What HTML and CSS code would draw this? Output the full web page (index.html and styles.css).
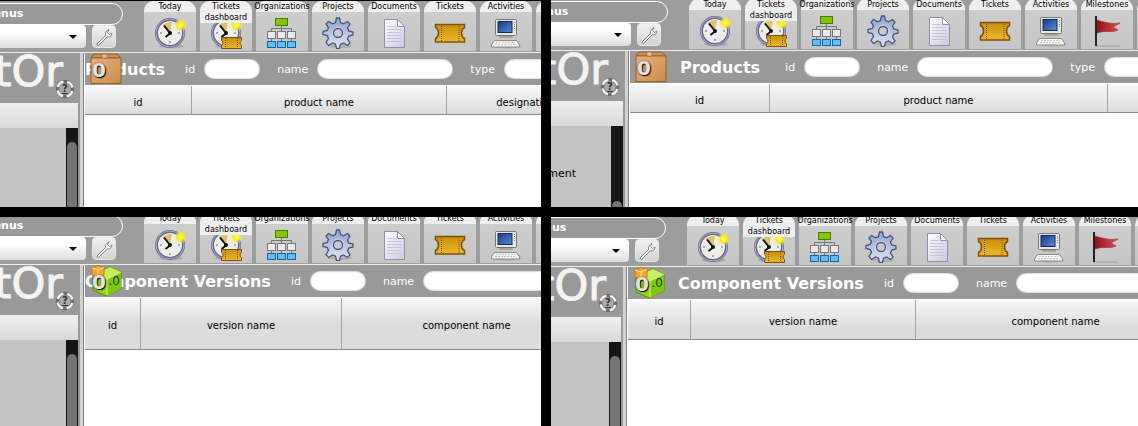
FILE: index.html
```html
<!DOCTYPE html>
<html lang="en">
<head>
  <meta charset="UTF-8">
  <meta name="viewport" content="width=device-width, initial-scale=1">
  <title>Products and Component Versions</title>
  <link rel="stylesheet" href="styles.css">
</head>
<body>
  <!-- Icon definitions -->
  <svg class="defs" aria-hidden="true">
    <defs>
      <linearGradient id="gGear" x1="0" y1="0" x2="0" y2="1"><stop offset="0" stop-color="#8fa3cc"/><stop offset="1" stop-color="#e4e4f2"/></linearGradient>
      <linearGradient id="gTicket" x1="0" y1="0" x2="0" y2="1"><stop offset="0" stop-color="#c98f0c"/><stop offset="1" stop-color="#ecb82c"/></linearGradient>
      <linearGradient id="gScreen" x1="0" y1="0" x2="1" y2="1"><stop offset="0" stop-color="#173a86"/><stop offset="1" stop-color="#5b8ad6"/></linearGradient>
      <linearGradient id="gDoc" x1="0" y1="0" x2="1" y2="1"><stop offset="0" stop-color="#ffffff"/><stop offset="1" stop-color="#c9c9e2"/></linearGradient>
      <linearGradient id="gFlag" x1="0" y1="0" x2="1" y2="0"><stop offset="0" stop-color="#8c1218"/><stop offset="1" stop-color="#e0545a"/></linearGradient>
      <linearGradient id="gBox" x1="0" y1="0" x2="1" y2="1"><stop offset="0" stop-color="#e8b27c"/><stop offset="1" stop-color="#cb8a4c"/></linearGradient>
      <radialGradient id="gSun"><stop offset="0" stop-color="#fffb60"/><stop offset="0.5" stop-color="#f7ea20"/><stop offset="1" stop-color="#f7ea20" stop-opacity="0"/></radialGradient>
    </defs>
    <symbol id="clock" viewBox="0 0 32 32">
      <ellipse cx="17" cy="29" rx="12" ry="2.5" fill="#999" opacity="0.6"/>
      <circle cx="16" cy="16" r="13.5" fill="#ededec" stroke="#67698f" stroke-width="3"/>
      <circle cx="16" cy="16" r="14" fill="none" stroke="#a9abc9" stroke-width="1"/>
      <path d="M16 16 8.500 8.500Q12 4.500 18 5Z" fill="#dfc268"/>
      <path d="M16 16 10 8.500M16 16.500l-4.500 3.500" stroke="#111" stroke-width="2" fill="none"/>
      <circle cx="16" cy="16" r="2" fill="#111"/>
      <path d="M16 24v2M24 16h2M6 16h2" stroke="#aaa" stroke-width="2"/>
      <circle cx="26.500" cy="8" r="6.500" fill="url(#gSun)"/>
    </symbol>
    <symbol id="ticket" viewBox="0 0 32 32">
      <path d="M1.500 7.500h29v3q-3 1.500-3 5.500t3 5.500v3.500h-29v-3.500q3-1.500 3-5.500t-3-5.500z" fill="url(#gTicket)" stroke="#7f500d" stroke-width="1.500"/>
      <path d="M7.500 9v15M25 9v15" stroke="#7f500d" stroke-width="1" stroke-dasharray="1 1"/>
    </symbol>
    <symbol id="clockticket" viewBox="0 0 32 32">
      <use href="#clock" width="32" height="32"/>
      <path d="M11.500 20.500h20v3q-1.500 1-1.500 2.500t1.500 2.500v3h-20v-3q1.500-1 1.500-2.500t-1.500-2.500z" fill="url(#gTicket)" stroke="#7f500d"/>
      <path d="M15.500 21v10M27.500 21v10" stroke="#7f500d" stroke-dasharray="1 1"/>
    </symbol>
    <symbol id="orgs" viewBox="0 0 32 32">
      <path d="M15.500 9v17M5.500 26V11.500h20V26" fill="none" stroke="#777"/>
      <rect x="9.500" y="1.500" width="12" height="7" fill="#82c500" stroke="#4c7b05"/>
      <g fill="#e9e9ee" stroke="#777"><rect x="1.500" y="14.500" width="8" height="7"/><rect x="11.500" y="14.500" width="8" height="7"/><rect x="21.500" y="14.500" width="8" height="7"/></g>
      <g fill="#66bdf5" stroke="#1465a3"><rect x="1.500" y="24.500" width="8" height="6"/><rect x="11.500" y="24.500" width="8" height="6"/><rect x="21.500" y="24.500" width="8" height="6"/></g>
    </symbol>
    <symbol id="gear" viewBox="0 0 32 32">
      <ellipse cx="18" cy="29" rx="12" ry="2" fill="#999" opacity="0.5"/>
      <path d="M13.500 5.500 14.500 1h3l1 4.500 3 1.300L25.500 4.500l2.500 2.500-2.500 4 1.200 3 4.300 1v3l-4.300 1-1.200 3 2.500 4-2.500 2.500-4-2.500-3 1.200-1 4.300h-3l-1-4.300-3-1.200-4 2.500L4 25.500l2.500-4-1.200-3L1 17.500v-3l4.300-1 1.200-3L4 7l2.500-2.500 4 2.300z" fill="url(#gGear)" stroke="#47547f" stroke-width="1.300"/>
      <circle cx="16" cy="16" r="4.500" fill="#c9cad2" stroke="#47547f" stroke-width="1.300"/>
      <circle cx="16" cy="16" r="6" fill="none" stroke="#cdd3e8" stroke-width="1"/>
    </symbol>
    <symbol id="doc" viewBox="0 0 32 32">
      <path d="M6.500 2.500h13l7 7v21h-20z" fill="url(#gDoc)" stroke="#8e8eb2"/>
      <path d="M19.500 2.500v7h7z" fill="#fff" stroke="#8e8eb2"/>
      <path d="M9 9.500h9M9 12.500h14M9 15.500h14M9 18.500h14M9 21.500h14M9 24.500h14" stroke="#c4c4da"/>
    </symbol>
    <symbol id="computer" viewBox="0 0 32 32">
      <ellipse cx="17" cy="29" rx="14" ry="2.500" fill="#999" opacity="0.6"/>
      <path d="M10 17h12l1 4H9z" fill="#a5a59c"/>
      <rect x="5.500" y="2.500" width="21" height="16" rx="1" fill="#e9e9e4" stroke="#77776f"/>
      <rect x="8" y="4.500" width="14" height="11" fill="url(#gScreen)" stroke="#10295f"/>
      <path d="M24.500 5v8" stroke="#888" stroke-dasharray="1 1"/>
      <path d="M4.500 23.500h22l3 4.500v2h-28v-2z" fill="#f4f4f0" stroke="#8d8d85"/>
      <path d="M6 25.500h19M5 27.500h21" stroke="#c5c5bc" stroke-dasharray="2 1"/>
    </symbol>
    <symbol id="flag" viewBox="0 0 32 32">
      <path d="M5 31h24" stroke="#aaa" stroke-width="1.500"/>
      <path d="M6 5q6 2 12 3t11 0q-3 2-7 4l5 3q-4 2-10 1.500T6 18z" fill="url(#gFlag)" stroke="#a8242c" stroke-width="0.600"/>
      <path d="M5 1v30" stroke="#111" stroke-width="1.800"/>
    </symbol>
    <symbol id="wrench" viewBox="0 0 20 20">
      <path d="M3 17 11.500 8.500Q11 4 15 2.500L13.500 5.500l2 2L18 6Q17.500 10.500 13 10L4.500 18.500Q2.500 18.500 3 17z" fill="#f3f3f3" stroke="#888"/>
    </symbol>
    <symbol id="buoy" viewBox="0 0 20 20">
      <circle cx="10" cy="10" r="7.500" fill="#aaa" stroke="#6c6c6c" stroke-width="3.500"/>
      <circle cx="10" cy="10" r="7.500" fill="none" stroke="#f4f4f4" stroke-width="2.500" stroke-dasharray="8 3.780" stroke-dashoffset="-2"/>
    </symbol>
    <symbol id="box" viewBox="0 0 32 32">
      <path d="M1 5 4 1h23l4 4z" fill="#c8905c" stroke="#93602f"/>
      <path d="M1 5h30v25.500H1z" fill="url(#gBox)" stroke="#93602f"/>
      <path d="M12 1h5v4h-5z" fill="#e9bb88" stroke="#93602f" stroke-width="0.500"/>
    </symbol>
    <symbol id="cubes" viewBox="0 0 32 32">
      <path d="M3 10 20 2l11 5v17L16 31 3 25z" fill="#8fd60b" stroke="#4f8d04"/>
      <path d="M3 10 20 2l11 5-14 7z" fill="#c2f060"/>
      <path d="M17 14v17l14-7V7z" fill="#7cc70f"/>
      <path d="M3 10l14 4 14-7M17 14v16" fill="none" stroke="#dcf7a0"/>
      <path d="M2 3 8 .500l6 2V10l-6 3-6-3z" fill="#f7a72b" stroke="#d57a05"/>
      <path d="M2 3l6 2 6-2.500M8 5v8" fill="none" stroke="#ffe0a0"/>
    </symbol>
  </svg>

  <main class="compare">
    <!-- Products, before -->
    <section class="shot shot-a">
      <div class="app">
        <header class="topbar">
          <div class="tools">
            <button type="button" class="menus">Menus</button>
            <div class="pick">
              <div class="combo">
                <select aria-label="Menu"><option></option></select>
                <svg class="arrow" viewBox="0 0 8 4"><path d="M0 0h8L4 4z"/></svg>
              </div>
              <button type="button" class="tool" aria-label="Settings"><svg><use href="#wrench"/></svg></button>
            </div>
          </div>
          <nav class="tabs">
            <button type="button" class="tab"><svg><use href="#clock"/></svg><span>Today</span></button>
            <button type="button" class="tab"><svg><use href="#clockticket"/></svg><span>Tickets<br>dashboard</span></button>
            <button type="button" class="tab"><svg><use href="#orgs"/></svg><span>Organizations</span></button>
            <button type="button" class="tab"><svg><use href="#gear"/></svg><span>Projects</span></button>
            <button type="button" class="tab"><svg><use href="#doc"/></svg><span>Documents</span></button>
            <button type="button" class="tab"><svg><use href="#ticket"/></svg><span>Tickets</span></button>
            <button type="button" class="tab"><svg><use href="#computer"/></svg><span>Activities</span></button>
            <button type="button" class="tab" aria-label="More"></button>
          </nav>
        </header>
        <div class="work">
          <aside class="side">
            <div class="logo">tOr<a class="help" href="#" aria-label="Help"><svg><use href="#buoy"/></svg><b>?</b></a></div>
            <div class="side-title"></div>
            <div class="side-list"><div class="entries"></div><div class="track"><div class="thumb"></div></div></div>
          </aside>
          <div class="splitter"></div>
          <div class="content">
            <form class="filters">
              <div class="object-icon"><svg><use href="#box"/></svg><b>0</b></div>
              <h1>Products</h1>
              <label for="a-id">id</label><input id="a-id" class="short" type="text">
              <label for="a-name">name</label><input id="a-name" type="text">
              <label for="a-type">type</label><input id="a-type" type="text">
            </form>
            <div class="list">
              <table>
                <colgroup><col class="w-107"><col class="w-255"><col class="w-158"></colgroup>
                <thead><tr><th>id</th><th>product name</th><th>designation</th></tr></thead>
              </table>
            </div>
          </div>
        </div>
      </div>
    </section>

    <!-- Products, after -->
    <section class="shot shot-b">
      <div class="app">
        <header class="topbar">
          <div class="tools">
            <button type="button" class="menus">Menus</button>
            <div class="pick">
              <div class="combo">
                <select aria-label="Menu"><option></option></select>
                <svg class="arrow" viewBox="0 0 8 4"><path d="M0 0h8L4 4z"/></svg>
              </div>
              <button type="button" class="tool" aria-label="Settings"><svg><use href="#wrench"/></svg></button>
            </div>
          </div>
          <nav class="tabs">
            <button type="button" class="tab"><svg><use href="#clock"/></svg><span>Today</span></button>
            <button type="button" class="tab"><svg><use href="#clockticket"/></svg><span>Tickets<br>dashboard</span></button>
            <button type="button" class="tab"><svg><use href="#orgs"/></svg><span>Organizations</span></button>
            <button type="button" class="tab"><svg><use href="#gear"/></svg><span>Projects</span></button>
            <button type="button" class="tab"><svg><use href="#doc"/></svg><span>Documents</span></button>
            <button type="button" class="tab"><svg><use href="#ticket"/></svg><span>Tickets</span></button>
            <button type="button" class="tab"><svg><use href="#computer"/></svg><span>Activities</span></button>
            <button type="button" class="tab"><svg><use href="#flag"/></svg><span>Milestones</span></button>
            <button type="button" class="tab" aria-label="More"></button>
          </nav>
        </header>
        <div class="work">
          <aside class="side">
            <div class="logo">tOr<a class="help" href="#" aria-label="Help"><svg><use href="#buoy"/></svg><b>?</b></a></div>
            <div class="side-title"></div>
            <div class="side-list"><div class="entries">ment</div><div class="track scrolled"><div class="thumb"></div></div></div>
          </aside>
          <div class="splitter"></div>
          <div class="content">
            <form class="filters spaced">
              <div class="object-icon"><svg><use href="#box"/></svg><b>0</b></div>
              <h1>Products</h1>
              <label for="b-id">id</label><input id="b-id" class="short" type="text">
              <label for="b-name">name</label><input id="b-name" type="text">
              <label for="b-type">type</label><input id="b-type" type="text">
            </form>
            <div class="list">
              <table>
                <colgroup><col class="w-140"><col class="w-338"><col class="w-200"></colgroup>
                <thead><tr><th>id</th><th>product name</th><th></th></tr></thead>
              </table>
            </div>
          </div>
        </div>
      </div>
    </section>

    <!-- Component versions, before -->
    <section class="shot shot-c">
      <div class="app">
        <header class="topbar">
          <div class="tools">
            <button type="button" class="menus">Menus</button>
            <div class="pick">
              <div class="combo">
                <select aria-label="Menu"><option></option></select>
                <svg class="arrow" viewBox="0 0 8 4"><path d="M0 0h8L4 4z"/></svg>
              </div>
              <button type="button" class="tool" aria-label="Settings"><svg><use href="#wrench"/></svg></button>
            </div>
          </div>
          <nav class="tabs">
            <button type="button" class="tab"><svg><use href="#clock"/></svg><span>Today</span></button>
            <button type="button" class="tab"><svg><use href="#clockticket"/></svg><span>Tickets<br>dashboard</span></button>
            <button type="button" class="tab"><svg><use href="#orgs"/></svg><span>Organizations</span></button>
            <button type="button" class="tab"><svg><use href="#gear"/></svg><span>Projects</span></button>
            <button type="button" class="tab"><svg><use href="#doc"/></svg><span>Documents</span></button>
            <button type="button" class="tab"><svg><use href="#ticket"/></svg><span>Tickets</span></button>
            <button type="button" class="tab"><svg><use href="#computer"/></svg><span>Activities</span></button>
            <button type="button" class="tab" aria-label="More"></button>
          </nav>
        </header>
        <div class="work">
          <aside class="side">
            <div class="logo">tOr<a class="help" href="#" aria-label="Help"><svg><use href="#buoy"/></svg><b>?</b></a></div>
            <div class="side-title"></div>
            <div class="side-list"><div class="entries"></div><div class="track"><div class="thumb"></div></div></div>
          </aside>
          <div class="splitter"></div>
          <div class="content">
            <form class="filters">
              <div class="object-icon"><svg><use href="#cubes"/></svg><b>0</b><i>.0</i></div>
              <h1>Component Versions</h1>
              <label for="c-id">id</label><input id="c-id" class="short" type="text">
              <label for="c-name">name</label><input id="c-name" type="text">
            </form>
            <div class="list tall">
              <table>
                <colgroup><col class="w-56"><col class="w-201"><col class="w-250"></colgroup>
                <thead><tr><th>id</th><th>version name</th><th>component name</th></tr></thead>
              </table>
            </div>
          </div>
        </div>
      </div>
    </section>

    <!-- Component versions, after -->
    <section class="shot shot-d">
      <div class="app">
        <header class="topbar">
          <div class="tools">
            <button type="button" class="menus">Menus</button>
            <div class="pick">
              <div class="combo">
                <select aria-label="Menu"><option></option></select>
                <svg class="arrow" viewBox="0 0 8 4"><path d="M0 0h8L4 4z"/></svg>
              </div>
              <button type="button" class="tool" aria-label="Settings"><svg><use href="#wrench"/></svg></button>
            </div>
          </div>
          <nav class="tabs">
            <button type="button" class="tab"><svg><use href="#clock"/></svg><span>Today</span></button>
            <button type="button" class="tab"><svg><use href="#clockticket"/></svg><span>Tickets<br>dashboard</span></button>
            <button type="button" class="tab"><svg><use href="#orgs"/></svg><span>Organizations</span></button>
            <button type="button" class="tab"><svg><use href="#gear"/></svg><span>Projects</span></button>
            <button type="button" class="tab"><svg><use href="#doc"/></svg><span>Documents</span></button>
            <button type="button" class="tab"><svg><use href="#ticket"/></svg><span>Tickets</span></button>
            <button type="button" class="tab"><svg><use href="#computer"/></svg><span>Activities</span></button>
            <button type="button" class="tab"><svg><use href="#flag"/></svg><span>Milestones</span></button>
            <button type="button" class="tab" aria-label="More"></button>
          </nav>
        </header>
        <div class="work">
          <aside class="side">
            <div class="logo">tOr<a class="help" href="#" aria-label="Help"><svg><use href="#buoy"/></svg><b>?</b></a></div>
            <div class="side-title"></div>
            <div class="side-list"><div class="entries"></div><div class="track"><div class="thumb"></div></div></div>
          </aside>
          <div class="splitter"></div>
          <div class="content">
            <form class="filters spaced">
              <div class="object-icon"><svg><use href="#cubes"/></svg><b>0</b><i>.0</i></div>
              <h1>Component Versions</h1>
              <label for="d-id">id</label><input id="d-id" class="short" type="text">
              <label for="d-name">name</label><input id="d-name" type="text">
            </form>
            <div class="list medium">
              <table>
                <colgroup><col class="w-63"><col class="w-225"><col class="w-280"></colgroup>
                <thead><tr><th>id</th><th>version name</th><th>component name</th></tr></thead>
              </table>
            </div>
          </div>
        </div>
      </div>
    </section>
  </main>
</body>
</html>
```
FILE: styles.css
```css
* {
  box-sizing: border-box;
  margin: 0;
  padding: 0;
}
body {
  font-family: Verdana, "DejaVu Sans", sans-serif;
  font-size: 11px;
  background: #000;
  color: #000;
}
button, input, select {
  font-family: inherit;
  border: none;
}
.defs {
  position: absolute;
  width: 0;
  height: 0;
}

/* Four windows side by side */
.compare {
  display: grid;
  grid-template-columns: 541fr 587fr;
  grid-template-rows: 207fr 209fr;
  gap: 10px;
  min-height: 100vh;
}
.shot {
  display: flex;
  overflow: hidden;
  min-width: 0;
  background: #fff;
}
.app {
  flex: 1;
  display: flex;
  flex-direction: column;
  min-width: 0;
}
/* how much of each window is cut off at the left and top */
.shot-a { border-top: 1px solid #000; }
.shot-b .app { margin: -1px 0 0 -6px; }
.shot-c .app { margin-top: -4px; }
.shot-d .app { margin: -2px 0 0 -8px; }

/* Top bar */
.topbar {
  display: flex;
  height: 52px;
  background: #9d9d9d;
  border-bottom: 1px solid #f0f0f0;
}
.tools {
  flex: 0 0 144px;
  padding-top: 2px;
}
.menus {
  display: block;
  width: 240px;
  height: 22px;
  margin-left: -117px;
  border: 1px solid #fff;
  border-radius: 11px;
  background: #999;
  color: #fff;
  font-size: 11px;
  font-weight: bold;
  line-height: 20px;
}
.pick {
  display: flex;
  gap: 6px;
}
.combo {
  position: relative;
  width: 86px;
}
.combo select {
  appearance: none;
  display: block;
  width: 100%;
  height: 23px;
  border-radius: 0 4px 4px 0;
  background: linear-gradient(#fff 30%, #ddd);
}
.arrow {
  position: absolute;
  top: 10px;
  right: 9px;
  width: 8px;
  height: 4px;
}
.tool {
  width: 24px;
  height: 23px;
  border-radius: 4px;
  background: linear-gradient(#f2f2f2, #d2d2d2);
  border: 1px solid #e6e6e6;
}
.tool svg {
  display: block;
  width: 20px;
  height: 20px;
  margin: 0 auto;
}
.tabs {
  flex: 1;
  display: flex;
  gap: 4px;
  min-width: 0;
}
.tab {
  position: relative;
  flex: 0 0 52px;
  height: 50px;
  padding: 14px 10px 0;
  border-radius: 10px 10px 0 0;
  background: linear-gradient(#efefef 11px, #cdcdcd 11px, #c6c6c6);
}
.tab svg {
  display: block;
  width: 32px;
  height: 32px;
}
.tab span {
  position: absolute;
  top: 0;
  left: 0;
  right: 0;
  display: flex;
  justify-content: center;
  border-radius: 10px 10px 0 0;
  background: #efefef;
  font-size: 8px;
  line-height: 11px;
  white-space: nowrap;
}

/* Left column */
.work {
  flex: 1;
  display: flex;
}
.side {
  flex: 0 0 78px;
  min-width: 0;
  display: flex;
  flex-direction: column;
}
.logo {
  position: relative;
  display: flex;
  justify-content: flex-end;
  height: 50px;
  padding-right: 15px;
  background: #999;
  color: #f3f3f3;
  font-family: "DejaVu Sans", sans-serif;
  font-size: 43px;
  line-height: 36px;
  -webkit-text-stroke: 1px #f3f3f3;
}
.help {
  position: absolute;
  right: 3px;
  bottom: 4px;
  width: 20px;
  height: 20px;
  color: #333;
  font-size: 10px;
  line-height: 20px;
  text-align: center;
  -webkit-text-stroke: 0;
}
.help svg {
  position: absolute;
  left: 0;
  top: 0;
  width: 20px;
  height: 20px;
}
.help b {
  position: relative;
}
.side-title {
  height: 25px;
  background: linear-gradient(#efefef, #d9d9d9);
}
.side-list {
  flex: 1;
  display: flex;
  background: #c3c3c3;
}
.entries {
  flex: 1;
  display: flex;
  justify-content: flex-end;
  padding: 41px 35px 0 0;
  line-height: 14px;
}
.track {
  display: flex;
  width: 12px;
  padding: 14px 1px 0;
  background: #161616;
  overflow: hidden;
}
.track.scrolled {
  padding-top: 75px;
}
.thumb {
  flex: 1;
  border-radius: 5px 5px 0 0;
  background: #747474;
}
.splitter {
  flex: 0 0 7px;
  background: linear-gradient(to right, #999 2px, #d2d2d2 2px 5px, #808080 5px 6px, #fff 6px);
}

/* Object list */
.content {
  flex: 1;
  min-width: 0;
  overflow: hidden;
}
.filters {
  position: relative;
  display: flex;
  align-items: center;
  height: 32px;
  background: #999;
  color: #fff;
  white-space: nowrap;
}
.filters h1 {
  margin-right: 3px;
  font-size: 16px;
}
.filters.spaced h1 {
  margin-left: 50px;
}
.shot-b .filters h1 {
  margin-right: 8px;
}
.filters label {
  padding: 0 9px 0 17px;
}
.filters input {
  flex: 0 0 136px;
  min-width: 0;
  height: 20px;
  padding: 0 8px;
  border-radius: 10px;
  background: #fff;
  box-shadow: inset 0 0 2px #888;
}
.filters .short {
  flex-basis: 56px;
}
.object-icon {
  position: absolute;
  left: 5px;
  top: 0;
  width: 32px;
  height: 32px;
}
.object-icon svg {
  display: block;
  width: 32px;
  height: 32px;
}
.object-icon b {
  position: absolute;
  left: 2px;
  top: 6px;
  color: #e2e2e2;
  font-size: 20px;
  line-height: 22px;
  text-shadow: 1px 1px 1px #000, 0 0 2px #444;
}
.object-icon i {
  position: absolute;
  right: 2px;
  top: 8px;
  color: #234303;
  font-size: 12px;
  font-style: normal;
  line-height: 16px;
}
.list {
  width: max-content;
  border-top: 1px solid #fff;
}
.list table {
  border-collapse: separate;
  border-spacing: 0;
}
.list th {
  height: 29px;
  padding-top: 4px;
  border-right: 1px solid #a3a3a3;
  border-bottom: 1px solid #8c8c8c;
  background: linear-gradient(#f8f8f8, #dcdcdc);
  font-size: 10px;
  font-weight: normal;
}
.list.tall th {
  height: 52px;
  background: linear-gradient(#f8f8f8, #dcdcdc 50%);
}
.list.medium th {
  height: 40px;
  background: linear-gradient(#f8f8f8, #dcdcdc 70%);
}
.w-56 { width: 56px; }
.w-63 { width: 63px; }
.w-107 { width: 107px; }
.w-140 { width: 140px; }
.w-158 { width: 158px; }
.w-200 { width: 200px; }
.w-201 { width: 201px; }
.w-225 { width: 225px; }
.w-250 { width: 250px; }
.w-255 { width: 255px; }
.w-280 { width: 280px; }
.w-338 { width: 338px; }
```
